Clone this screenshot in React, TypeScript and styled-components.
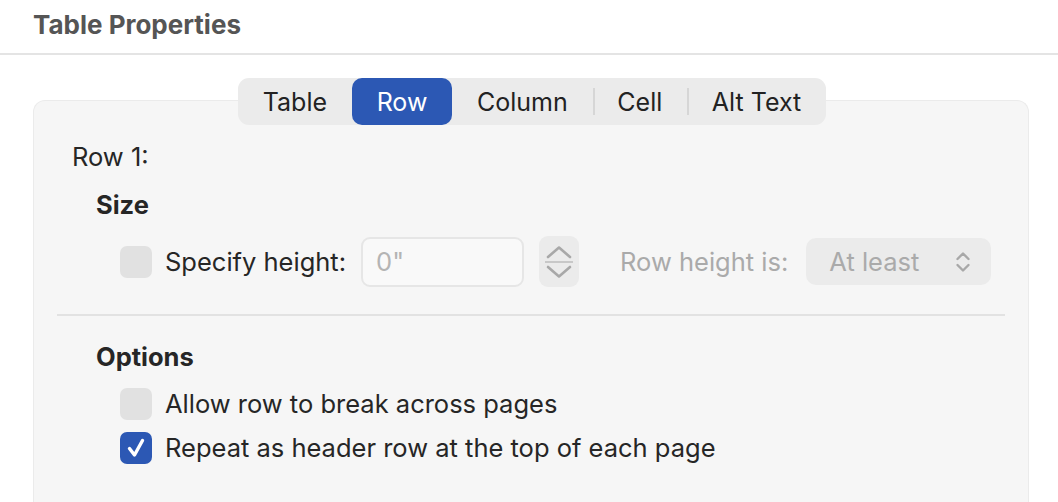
import styled, { createGlobalStyle } from 'styled-components'

const GlobalStyle = createGlobalStyle`
  html, body {
    margin: 0;
    padding: 0;
    background: #ffffff;
  }
  body {
    font-family: Inter, "Noto Sans", "Liberation Sans", sans-serif;
    color: #262626;
    overflow: hidden;
  }
`

const tabs = ['Table', 'Row', 'Column', 'Cell', 'Alt Text']

export default function App() {
  const active = 1
  return (
    <Page>
      <GlobalStyle />
      <Header>
        <Title>Table Properties</Title>
      </Header>

      <Panel>
        <Tabs>
          {tabs.map((t, i) => (
            <Tab key={t} $active={i === active} $sep={i > active + 1}>
              {t}
            </Tab>
          ))}
        </Tabs>

        <RowLabel>Row 1:</RowLabel>

        <Section>
          <SectionTitle>Size</SectionTitle>
          <ControlRow $mt={16}>
            <Check />
            <Label>Specify height:</Label>
            <Input>0"</Input>
            <Stepper>
              <svg width="26" height="16" viewBox="0 0 26 16" fill="none">
                <path d="M2 13 L13 3.5 L24 13" stroke="#a8a8a8" strokeWidth="2.6" strokeLinecap="round" strokeLinejoin="round" />
              </svg>
              <StepLine />
              <svg width="26" height="16" viewBox="0 0 26 16" fill="none">
                <path d="M2 3 L13 12.5 L24 3" stroke="#a8a8a8" strokeWidth="2.6" strokeLinecap="round" strokeLinejoin="round" />
              </svg>
            </Stepper>
            <Label $dim>Row height is:</Label>
            <Select>
              <span>At least</span>
              <svg width="16" height="24" viewBox="0 0 16 24" fill="none">
                <path d="M2.5 9 L8 3.5 L13.5 9" stroke="#a8a8a8" strokeWidth="2.4" strokeLinecap="round" strokeLinejoin="round" />
                <path d="M2.5 15 L8 20.5 L13.5 15" stroke="#a8a8a8" strokeWidth="2.4" strokeLinecap="round" strokeLinejoin="round" />
              </svg>
            </Select>
          </ControlRow>
        </Section>

        <Divider />

        <Section>
          <SectionTitle $mt={26}>Options</SectionTitle>
          <OptionList>
            <ControlRow>
              <Check />
              <Label>Allow row to break across pages</Label>
            </ControlRow>
            <ControlRow>
              <Check $on>
                <svg width="22" height="24" viewBox="0 0 22 24" fill="none">
                  <path d="M4.5 12.5 L9.5 19 L17.5 4.5" stroke="#fff" strokeWidth="3.4" strokeLinecap="round" strokeLinejoin="round" />
                </svg>
              </Check>
              <Label>Repeat as header row at the top of each page</Label>
            </ControlRow>
          </OptionList>
        </Section>
      </Panel>
    </Page>
  )
}

// Styled Components
const Page = styled.div`
  width: 1058px;
  height: 502px;
  display: flex;
  flex-direction: column;
`
const Header = styled.div`
  height: 55px;
  flex-shrink: 0;
  border-bottom: 2px solid #e4e4e4;
  padding-left: 33px;
  display: flex;
  align-items: center;
  box-sizing: border-box;
`
const Title = styled.h1`
  margin: 0;
  margin-top: -4px;
  font-size: 26px;
  font-weight: 700;
  color: #555555;
`
const Panel = styled.div`
  margin: 45px 29px 0 33px;
  flex: 1;
  background: #f6f6f6;
  border: 1px solid #ebebeb;
  border-bottom: none;
  border-radius: 12px 12px 0 0;
  padding: 0 23px 0 38px;
  display: flex;
  flex-direction: column;
`
const Tabs = styled.div`
  align-self: center;
  margin: -23px 0 0 -13px;
  height: 47px;
  background: #ebebeb;
  border-radius: 11px;
  display: flex;
  align-items: stretch;
`
const Tab = styled.div<{ $active?: boolean; $sep?: boolean }>`
  position: relative;
  display: flex;
  align-items: center;
  padding: 0 24.8px;
  font-size: 25px;
  color: ${p => (p.$active ? '#ffffff' : '#222222')};
  background: ${p => (p.$active ? '#2c58b4' : 'transparent')};
  border-radius: 10px;
  &::before {
    content: '';
    display: ${p => (p.$sep ? 'block' : 'none')};
    position: absolute;
    left: 0;
    top: 10px;
    bottom: 10px;
    width: 2px;
    background: #d6d6d6;
  }
`
const RowLabel = styled.div`
  margin-top: 17px;
  font-size: 25.5px;
  line-height: 30px;
`
const Section = styled.div`
  padding-left: 24px;
  display: flex;
  flex-direction: column;
`
const SectionTitle = styled.div<{ $mt?: number }>`
  margin-top: ${p => p.$mt ?? 18}px;
  font-size: 25.5px;
  font-weight: 700;
  line-height: 30px;
`
const ControlRow = styled.div<{ $mt?: number }>`
  display: flex;
  align-items: center;
  padding-left: 24px;
  margin-top: ${p => p.$mt ?? 0}px;
`
const OptionList = styled.div`
  display: flex;
  flex-direction: column;
  gap: 12px;
  margin-top: 16px;
`
const Check = styled.div<{ $on?: boolean }>`
  width: 32px;
  height: 32px;
  border-radius: 7px;
  background: ${p => (p.$on ? '#2c58b4' : '#e1e1e1')};
  display: flex;
  align-items: center;
  justify-content: center;
  margin-right: 13px;
  flex-shrink: 0;
`
const Label = styled.span<{ $dim?: boolean }>`
  font-size: 25.5px;
  line-height: 32px;
  color: ${p => (p.$dim ? '#aaaaaa' : '#262626')};
  white-space: nowrap;
`
const Input = styled.div`
  margin-left: 15px;
  width: 163px;
  height: 50px;
  flex-shrink: 0;
  box-sizing: border-box;
  border: 2px solid #e6e6e6;
  border-radius: 9px;
  background: #f9f9f9;
  padding-left: 13px;
  display: flex;
  align-items: center;
  font-size: 25.5px;
  color: #b4b4b4;
`
const Stepper = styled.div`
  margin: 0 41px 0 15px;
  width: 40px;
  height: 51px;
  flex-shrink: 0;
  border-radius: 9px;
  background: #ebebeb;
  display: flex;
  flex-direction: column;
  align-items: center;
  justify-content: center;
  gap: 1px;
`
const StepLine = styled.div`
  width: 28px;
  height: 2px;
  background: #c8c8c8;
`
const Select = styled.div`
  margin-left: 18px;
  width: 185px;
  height: 47px;
  flex-shrink: 0;
  box-sizing: border-box;
  border-radius: 10px;
  background: #ebebeb;
  display: flex;
  align-items: center;
  justify-content: space-between;
  padding: 0 20px 0 23px;
  font-size: 25.5px;
  color: #aaaaaa;
`
const Divider = styled.div`
  height: 2px;
  background: #e2e2e2;
  margin: 27px 0 0 -15px;
`
